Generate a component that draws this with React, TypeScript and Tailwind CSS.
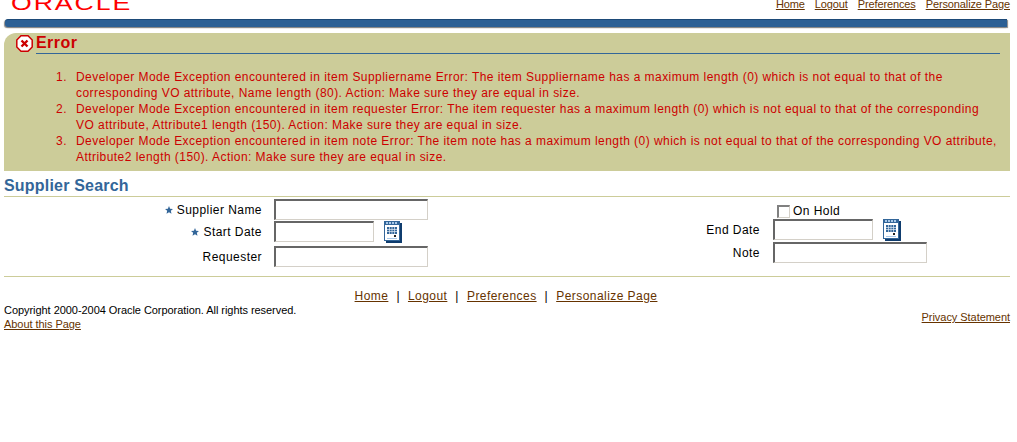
const linkClass = "text-[#663300] underline";
const inputClass =
  "block h-[21px] border-t-2 border-l-2 border-r border-b border-t-[#666666] border-l-[#666666] border-r-[#d4d0c8] border-b-[#d4d0c8] bg-white";

const messages = [
  "Developer Mode Exception encountered in item Suppliername Error: The item Suppliername has a maximum length (0) which is not equal to that of the corresponding VO attribute, Name length (80). Action: Make sure they are equal in size.",
  "Developer Mode Exception encountered in item requester Error: The item requester has a maximum length (0) which is not equal to that of the corresponding VO attribute, Attribute1 length (150). Action: Make sure they are equal in size.",
  "Developer Mode Exception encountered in item note Error: The item note has a maximum length (0) which is not equal to that of the corresponding VO attribute, Attribute2 length (150). Action: Make sure they are equal in size.",
];

function ErrorIcon() {
  return (
    <svg width="17" height="17" viewBox="0 0 17 17" className="mt-[2px] shrink-0 self-start">
      <polygon
        points="5,0.8 12,0.8 16.2,5 16.2,12 12,16.2 5,16.2 0.8,12 0.8,5"
        fill="#fff"
        stroke="#cc0000"
        strokeWidth="1.5"
      />
      <path d="M5.5 5.5 L11.5 11.5 M11.5 5.5 L5.5 11.5" stroke="#cc0000" strokeWidth="2.4" />
    </svg>
  );
}

function CalendarIcon() {
  return (
    <svg width="18" height="22" viewBox="0 0 18 22" className="mt-[1px] shrink-0">
      <rect x="2" y="2" width="16" height="20" fill="#0f3c6e" />
      <rect x="0" y="0" width="16" height="20" fill="#336699" />
      <rect x="2" y="1" width="2" height="2" fill="#a8c8e8" />
      <rect x="5" y="1" width="2" height="2" fill="#a8c8e8" />
      <rect x="8" y="1" width="2" height="2" fill="#a8c8e8" />
      <rect x="11" y="1" width="2" height="2" fill="#a8c8e8" />
      <rect x="1" y="4" width="14" height="15" fill="#ffffff" />
      <rect x="3" y="6" width="10" height="7" fill="#336699" />
      <path d="M3 8.5 H13 M3 10.5 H13 M5.5 6 V13 M8 6 V13 M10.5 6 V13" stroke="#dfeaf5" strokeWidth="0.7" />
      <rect x="10" y="14" width="2" height="2" fill="#222" />
      <rect x="3" y="17" width="10" height="1" fill="#a8c8e8" />
    </svg>
  );
}

function Star() {
  return (
    <svg width="8" height="8" viewBox="0 0 10 10" className="mr-[4px] shrink-0">
      <polygon points="5,0 6.4,3.4 10,3.7 7.3,6 8.1,9.6 5,7.7 1.9,9.6 2.7,6 0,3.7 3.6,3.4" fill="#336699" />
    </svg>
  );
}

export default function App() {
  return (
    <div className="h-[442px] w-[1017px] overflow-hidden bg-white pl-1 pr-[7px] font-['Liberation_Sans',Arial,sans-serif] text-[12px] tracking-[0.45px] text-black">
      {/* header */}
      <div className="flex h-[19px] items-start justify-between">
        <div className="-mt-[7px] ml-[7px] h-[20px] origin-left scale-x-[1.27] overflow-hidden text-[21px] leading-[20px] tracking-[1.5px] text-[#ff0000]">
          ORACLE
        </div>
        <div className="-mt-[3px] flex gap-[10px] text-[11px] leading-[14px] tracking-[-0.12px]">
          <a className={linkClass}>Home</a>
          <a className={linkClass}>Logout</a>
          <a className={linkClass}>Preferences</a>
          <a className={linkClass}>Personalize Page</a>
        </div>
      </div>
      <div className="ml-[1px] mr-[3px] h-[8px] rounded-l-[3px] border-t border-[#1d4a78] bg-[#2b5f95] shadow-[-1px_1px_1px_#888888,1px_1px_1px_#888888]" />

      {/* error box */}
      <div className="mt-[6px] h-[138px] rounded-tl-[12px] bg-[#cccc99] pr-[10px]">
        <div className="flex h-[21px] items-end pl-[12px]">
          <ErrorIcon />
          <div className="ml-[3px] flex-1 border-b border-[#336699] text-[16px] leading-[20px] font-bold text-[#cc0000]">
            Error
          </div>
        </div>
        <ol className="mt-[15px] text-[12px] leading-[16px] text-[#cc0000]">
          {messages.map((m, i) => (
            <li key={i} className="flex">
              <span className="w-[63px] shrink-0 text-right">{i + 1}.</span>
              <span className="ml-[9px]">{m}</span>
            </li>
          ))}
        </ol>
      </div>

      {/* form */}
      <div className="mt-[5px] border-b border-[#cccc99] text-[16px] leading-[20px] font-bold tracking-[0.2px] text-[#336699]">
        Supplier Search
      </div>
      <div className="flex h-[80px] border-b border-[#cccc99] pt-[2px]">
        <div className="flex w-[506px] flex-col gap-[1px]">
          <div className="flex h-[21px] items-center">
            <div className="flex w-[258px] items-center justify-end"><Star />Supplier Name</div>
            <input className={`${inputClass} ml-[12px] w-[154px]`} />
          </div>
          <div className="flex h-[21px] items-center">
            <div className="flex w-[258px] items-center justify-end pt-[1px]"><Star />Start Date</div>
            <input className={`${inputClass} ml-[12px] w-[100px]`} />
            <div className="ml-[10px]"><CalendarIcon /></div>
          </div>
          <div className="mt-[3px] flex h-[21px] items-center">
            <div className="w-[258px] text-right">Requester</div>
            <input className={`${inputClass} ml-[12px] w-[154px]`} />
          </div>
        </div>
        <div className="flex flex-col">
          <div className="flex h-[20px] items-center pl-[267px] pt-[4px]">
            <input type="checkbox" className="h-[13px] w-[13px] appearance-none border-t-2 border-l-2 border-r border-b border-t-[#808080] border-l-[#808080] border-r-[#d4d0c8] border-b-[#d4d0c8] bg-white" />
            <span className="ml-[3px]">On Hold</span>
          </div>
          <div className="flex h-[21px] items-center">
            <div className="w-[250px] pt-[1px] text-right">End Date</div>
            <input className={`${inputClass} ml-[13px] w-[100px]`} />
            <div className="ml-[10px]"><CalendarIcon /></div>
          </div>
          <div className="mt-[2px] flex h-[21px] items-center">
            <div className="w-[250px] pt-[1px] text-right">Note</div>
            <input className={`${inputClass} ml-[13px] w-[154px]`} />
          </div>
        </div>
      </div>

      {/* footer */}
      <div className="mt-[12px] flex justify-center gap-[8px] pr-[2px] leading-[14px]">
        <a className={linkClass}>Home</a>
        <span>|</span>
        <a className={linkClass}>Logout</a>
        <span>|</span>
        <a className={linkClass}>Preferences</a>
        <span>|</span>
        <a className={linkClass}>Personalize Page</a>
      </div>
      <div className="flex items-end justify-between text-[11px] leading-[14px] tracking-[-0.05px]">
        <div>
          <div>Copyright 2000-2004 Oracle Corporation. All rights reserved.</div>
          <a className={linkClass}>About this Page</a>
        </div>
        <a className={`${linkClass} mb-[7px]`}>Privacy Statement</a>
      </div>
    </div>
  );
}
